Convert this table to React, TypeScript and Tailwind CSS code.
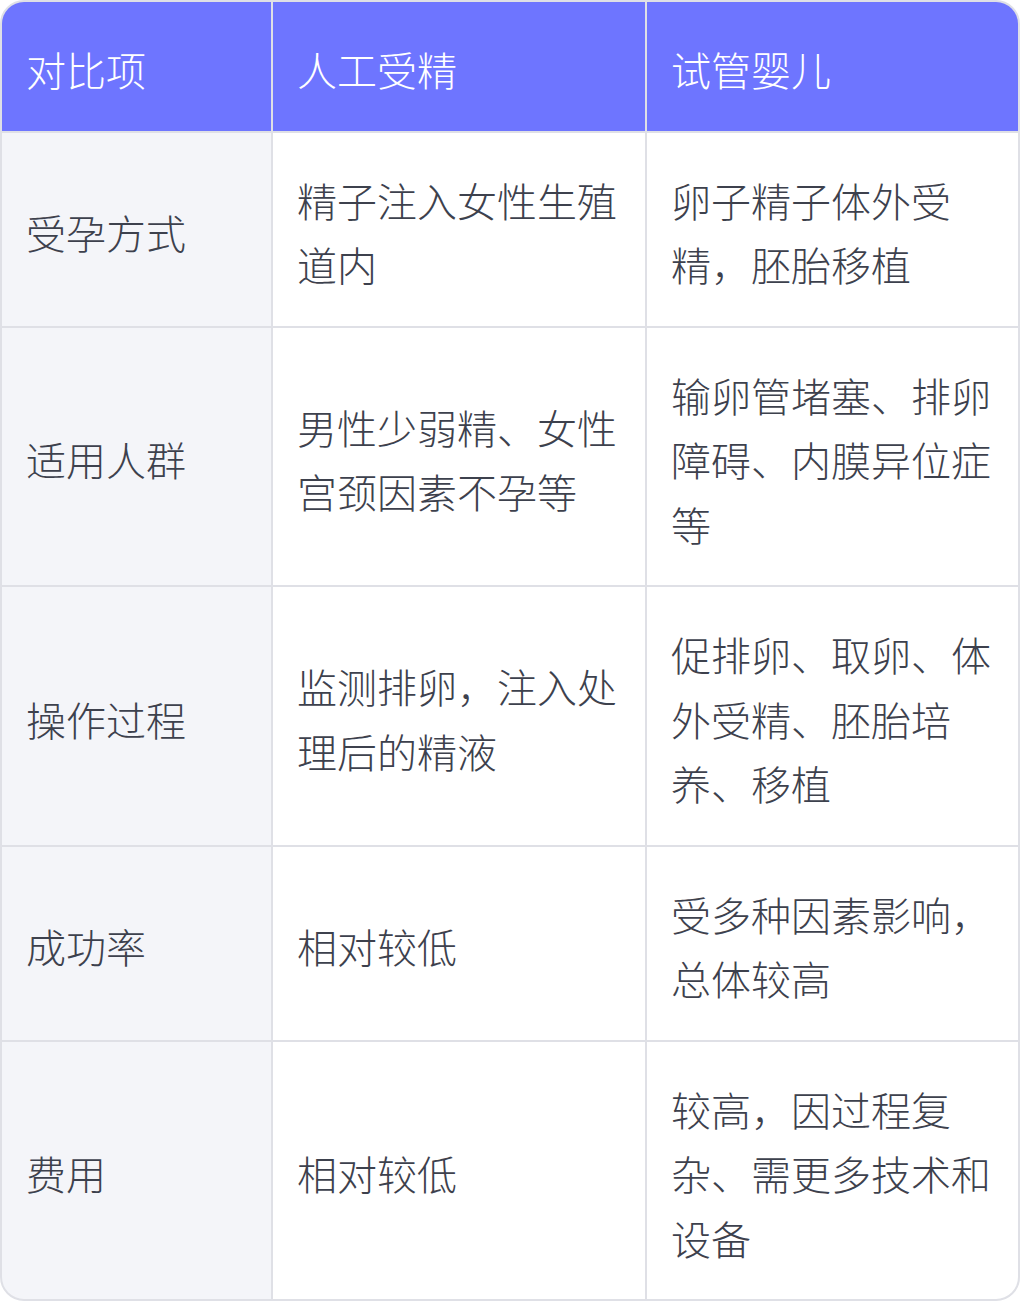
const headers = ["对比项", "人工受精", "试管婴儿"]

const rows = [
  ["受孕方式", "精子注入女性生殖道内", "卵子精子体外受精，胚胎移植"],
  ["适用人群", "男性少弱精、女性宫颈因素不孕等", "输卵管堵塞、排卵障碍、内膜异位症等"],
  ["操作过程", "监测排卵，注入处理后的精液", "促排卵、取卵、体外受精、胚胎培养、移植"],
  ["成功率", "相对较低", "受多种因素影响，总体较高"],
  ["费用", "相对较低", "较高，因过程复杂、需更多技术和设备"],
]

export default function App() {
  return (
    <div
      className="w-[1020px] h-[1303px] bg-white"
      style={{ fontFamily: '"Noto Sans CJK SC", "Noto Sans", sans-serif' }}
    >
      <div className="overflow-hidden rounded-[24px] border-2 border-[#dfe0e6] bg-[#dfe0e6]">
        <div className="grid grid-cols-[269px_372px_1fr] gap-[2px]">
          {headers.map((h) => (
            <div
              key={h}
              className="flex items-center bg-[#6e75ff] px-6 pt-[35px] pb-[29px] text-[40px] font-light leading-[64.5px] text-white"
            >
              {h}
            </div>
          ))}
          {rows.map((row) =>
            row.map((cell, i) => (
              <div
                key={row[0] + i}
                className={
                  "flex items-center px-6 pt-[35px] pb-[29px] text-[40px] font-light leading-[64.5px] text-[#3d414d] " +
                  (i === 0 ? "bg-[#f4f5f9]" : "bg-white")
                }
              >
                <span>{cell}</span>
              </div>
            ))
          )}
        </div>
      </div>
    </div>
  )
}
